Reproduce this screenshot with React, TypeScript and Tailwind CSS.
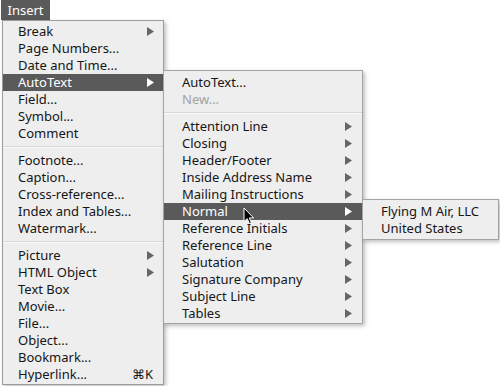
import React from "react";

type Item =
  | { sep: true }
  | { label: string; arrow?: boolean; hl?: boolean; disabled?: boolean; shortcut?: string; sep?: false };

const Arrow = ({ white }: { white?: boolean }) => (
  <svg width="7" height="9" viewBox="0 0 7 9" className="shrink-0">
    <polygon points="0,0 7,4.5 0,9" fill={white ? "#ffffff" : "#666666"} />
  </svg>
);

function Menu({ items, textPad, arrowRight }: { items: Item[]; textPad: string; arrowRight: string }) {
  return (
    <div className="flex flex-col">
      {items.map((it, i) =>
        it.sep ? (
          <div key={i} className="h-[10px] flex flex-col justify-center">
            <div className="h-px bg-[#d6d6d6]" />
            <div className="h-px bg-[#fafafa]" />
          </div>
        ) : (
          <div
            key={i}
            className={`h-[17px] flex items-center ${textPad} ${arrowRight} ${
              it.hl ? "bg-[#5a5a5a] text-white" : it.disabled ? "text-[#a3a3a3]" : "text-[#161616]"
            }`}
          >
            <span className="flex-1 whitespace-nowrap leading-none">{it.label}</span>
            {it.arrow && <Arrow white={it.hl} />}
            {it.shortcut && <span className="leading-none pr-[1px]">{it.shortcut}</span>}
          </div>
        )
      )}
    </div>
  );
}

const mainItems: Item[] = [
  { label: "Break", arrow: true },
  { label: "Page Numbers..." },
  { label: "Date and Time..." },
  { label: "AutoText", arrow: true, hl: true },
  { label: "Field..." },
  { label: "Symbol..." },
  { label: "Comment" },
  { sep: true },
  { label: "Footnote..." },
  { label: "Caption..." },
  { label: "Cross-reference..." },
  { label: "Index and Tables..." },
  { label: "Watermark..." },
  { sep: true },
  { label: "Picture", arrow: true },
  { label: "HTML Object", arrow: true },
  { label: "Text Box" },
  { label: "Movie..." },
  { label: "File..." },
  { label: "Object..." },
  { label: "Bookmark..." },
  { label: "Hyperlink...", shortcut: "⌘K" },
];

const subItems: Item[] = [
  { label: "AutoText..." },
  { label: "New...", disabled: true },
  { sep: true },
  { label: "Attention Line", arrow: true },
  { label: "Closing", arrow: true },
  { label: "Header/Footer", arrow: true },
  { label: "Inside Address Name", arrow: true },
  { label: "Mailing Instructions", arrow: true },
  { label: "Normal", arrow: true, hl: true },
  { label: "Reference Initials", arrow: true },
  { label: "Reference Line", arrow: true },
  { label: "Salutation", arrow: true },
  { label: "Signature Company", arrow: true },
  { label: "Subject Line", arrow: true },
  { label: "Tables", arrow: true },
];

const sub2Items: Item[] = [{ label: "Flying M Air, LLC" }, { label: "United States" }];

export default function App() {
  return (
    <div className="relative w-[500px] h-[386px] bg-white overflow-hidden text-[13px] font-['Noto_Sans',sans-serif]">
      <div className="ml-px w-[49px] h-[20px] bg-[#5a5a5a] text-white flex items-center justify-center leading-none">
        Insert
      </div>
      <div className="ml-[2px] w-[162px] h-[365px] border border-[#9c9c9c] bg-[#eeeeee] pt-[2px] shadow-[2px_2px_4px_rgba(0,0,0,0.25)]">
        <Menu items={mainItems} textPad="pl-[15px]" arrowRight="pr-[9px]" />
      </div>

      <div className="absolute left-[163px] top-[70px] w-[200px] h-[254px] border border-[#a4a4a4] bg-[#eeeeee] pt-[3px] shadow-[2px_2px_4px_rgba(0,0,0,0.25)]">
        <Menu items={subItems} textPad="pl-[18px]" arrowRight="pr-[10px]" />
      </div>

      <div className="absolute left-[362px] top-[199px] w-[137px] h-[41px] border border-[#a4a4a4] bg-[#eeeeee] pt-[3px] shadow-[2px_2px_4px_rgba(0,0,0,0.25)]">
        <Menu items={sub2Items} textPad="pl-[18px]" arrowRight="pr-[10px]" />
      </div>

      <svg className="absolute left-[243px] top-[207px]" width="12" height="18" viewBox="0 0 12 18">
        <path
          d="M1 1 L1 14.5 L4.2 11.6 L6.4 16.6 L8.4 15.7 L6.3 10.9 L10.6 10.9 Z"
          fill="#000"
          stroke="#fff"
          strokeWidth="1"
          strokeLinejoin="round"
        />
      </svg>
    </div>
  );
}
